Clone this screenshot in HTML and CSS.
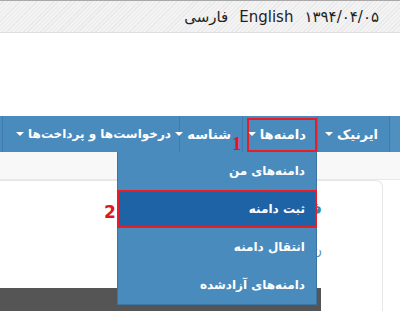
FILE: index.html
```html
<!DOCTYPE html>
<html lang="fa" dir="rtl">

<head>
    <meta charset="UTF-8">
    <title>ثبت دامنه</title>
    <link rel="stylesheet" href="styles.css">
</head>

<body>
    <div class="topbar">
        <span class="date">۱۳۹۴/۰۴/۰۵</span>
        <a href="#" class="lang" dir="ltr">English</a>
        <a href="#" class="lang">فارسی</a>
    </div>

    <div class="header-space"></div>

    <nav class="nav">
        <div class="nav-edge"></div>
        <ul class="menu">
            <li class="menu-item w-irnic">ایرنیک <span class="caret"></span></li>
            <li class="menu-item w-domains open">
                دامنه‌ها <span class="caret"></span>
                <span class="mark mark-nav"></span>
                <span class="step step-one">1</span>
                <ul class="dropdown">
                    <li>دامنه‌های من</li>
                    <li class="active">ثبت دامنه
                        <span class="mark mark-drop"></span>
                        <span class="step step-two">2</span>
                    </li>
                    <li>انتقال دامنه</li>
                    <li>دامنه‌های آزادشده</li>
                </ul>
            </li>
            <li class="menu-item w-id">شناسه <span class="caret"></span></li>
            <li class="menu-item w-req">درخواست‌ها و پرداخت‌ها <span class="caret"></span></li>
        </ul>
    </nav>

    <div class="breadcrumb"></div>

    <div class="card">
        <h2 class="card-title">ف</h2>
        <p class="card-text">ن</p>
        <div class="card-bottom"></div>
    </div>
</body>

</html>
```

FILE: styles.css
```css
body {
    margin: 0;
    font-family: "DejaVu Sans", sans-serif;
    background-color: #fff;
    overflow: hidden;
}

.topbar {
    height: 31px;
    border-top: 1px solid #a9a9a9;
    border-bottom: 1px solid #dedede;
    background: repeating-linear-gradient(135deg, #f3f3f3 0, #f3f3f3 2px, #e9e9e9 2px, #e9e9e9 3px);
    display: flex;
    align-items: center;
    gap: 11px;
    padding-right: 21px;
    font-size: 15px;
    color: #222;
}

.topbar .lang {
    color: #222;
    text-decoration: none;
}

.header-space {
    height: 83px;
}

.nav {
    display: flex;
    height: 36px;
    background-color: #4a8bbd;
}

.nav-edge {
    width: 10px;
    border-left: 1px solid #3f7cad;
    background-color: #4f90c1;
}

.menu {
    display: flex;
    margin: 0;
    padding: 0;
    list-style: none;
    flex: 1;
}

.menu-item {
    position: relative;
    display: flex;
    align-items: center;
    gap: 4px;
    box-sizing: border-box;
    padding: 0 11px;
    height: 36px;
    color: #fff;
    font-weight: bold;
    font-size: 13px;
    white-space: nowrap;
    border-left: 1px solid #3f7cad;
}

.w-irnic { width: 72px; }
.w-domains { width: 75px; }
.w-id { width: 63px; }
.w-req { width: 177px; font-size: 12px; padding-right: 8px; }

.caret {
    width: 0;
    height: 0;
    border-left: 4px solid transparent;
    border-right: 4px solid transparent;
    border-top: 4px solid #fff;
}

.mark {
    position: absolute;
    border: 2px solid #ec1c24;
    box-sizing: border-box;
    pointer-events: none;
}

.mark-nav {
    top: 2px;
    bottom: 0;
    right: 0;
    left: 4px;
}

.step {
    position: absolute;
    color: #e3141c;
    font-weight: bold;
}

.step-one {
    left: -11px;
    bottom: -3px;
    font-family: "Liberation Serif", serif;
    font-size: 19px;
}

.dropdown {
    position: absolute;
    top: 36px;
    right: 0;
    width: 198px;
    margin: 0;
    padding: 0;
    list-style: none;
    background-color: #4a8bbd;
    border: 1px solid #3a75a3;
    border-top: none;
    z-index: 2;
}

.dropdown li {
    position: relative;
    height: 38px;
    line-height: 38px;
    padding-right: 11px;
    font-size: 12px;
    font-weight: bold;
    color: #fff;
}

.dropdown li.active {
    background-color: #1f63a7;
}

.mark-drop {
    top: 0;
    bottom: 0;
    right: -1px;
    left: -1px;
}

.step-two {
    left: -14px;
    top: 3px;
    font-size: 17px;
}

.breadcrumb {
    height: 27px;
    background-color: #f8f8f8;
    border-bottom: 1px solid #e8e8e8;
}

.card {
    margin-right: 17px;
    margin-left: -10px;
    height: 140px;
    border: 1px solid #e6e6e6;
    border-bottom: none;
    border-top-right-radius: 7px;
    position: relative;
}

.card-title {
    margin: 19px 60px 0 0;
    font-size: 15px;
    color: #2a8fb3;
}

.card-text {
    margin: 25px 60px 0 0;
    font-size: 13px;
    color: #5a8fb3;
}

.card-bottom {
    position: absolute;
    top: 107px;
    right: 61px;
    left: 0;
    bottom: 0;
    background-color: #555;
}
```
